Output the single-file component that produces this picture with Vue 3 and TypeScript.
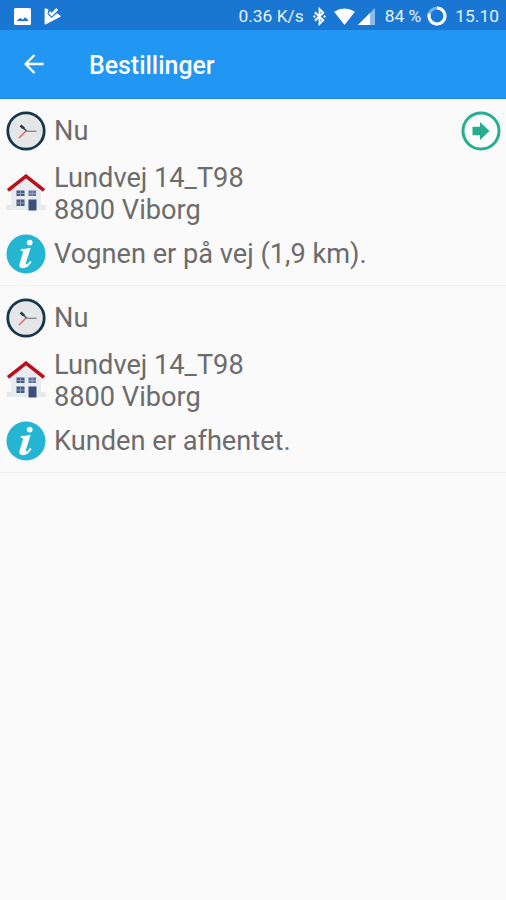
<script setup lang="ts">
interface Order {
  id: number
  time: string
  street: string
  city: string
  status: string
  enRoute: boolean
}

const orders: Order[] = [
  { id: 1, time: 'Nu', street: 'Lundvej 14_T98', city: '8800 Viborg', status: 'Vognen er på vej (1,9 km).', enRoute: true },
  { id: 2, time: 'Nu', street: 'Lundvej 14_T98', city: '8800 Viborg', status: 'Kunden er afhentet.', enRoute: false },
]
</script>

<template>
  <div class="screen">
    <header class="status-bar">
      <svg class="picture" viewBox="0 0 17 17">
        <path fill="#fff" fill-rule="evenodd" d="M1.5 0h14A1.5 1.5 0 0 1 17 1.500v14a1.500 1.500 0 0 1-1.500 1.500h-14A1.500 1.500 0 0 1 0 15.500v-14A1.500 1.500 0 0 1 1.500 0zM3.200 13h10.800v-1.200L11 9.300l-2.200 2.400L6.300 10l-3.100 2.200z" />
      </svg>
      <svg class="play" viewBox="0 0 17 17">
        <path fill="#fff" d="M.6 1.400Q.6.200 1.800.4L4.500 1.500 3.500 6l4.100 4.100L12.800 5.200l3.200 2q1.400.9 0 1.900L2 16.300Q.6 17 .6 15.500z" />
        <path fill="none" stroke="#fff" stroke-width="2.600" d="M5.300 4.300l2.400 2.300L13.200 1" />
      </svg>
      <span class="speed">0.36 K/s</span>
      <svg class="bluetooth" viewBox="0 0 14 20">
        <path fill="none" stroke="#fff" stroke-width="2.100" d="M2 5.500l9 8.500L7 18V2l4 4-9 8.500" />
        <path fill="#fff" d="M0 10l1.500-1.500L3 10l-1.500 1.500zM11 10l1.500-1.500L14 10l-1.500 1.500z" />
      </svg>
      <svg class="wifi" viewBox="0 0 22 18">
        <path fill="#fff" d="M0 4Q11-3.200 22 4L11 18z" />
      </svg>
      <svg class="signal" viewBox="0 0 17 17">
        <path fill="#8bbce9" d="M17 0v17H0z" />
        <path fill="#fff" d="M12 5v12H0z" />
      </svg>
      <span class="percent">84 %</span>
      <svg class="battery" viewBox="0 0 20 20">
        <circle cx="10" cy="10" r="8" fill="none" stroke="#75afe5" stroke-width="3" />
        <path d="M10 2a8 8 0 1 1-7.600 5.500" fill="none" stroke="#fff" stroke-width="3" />
      </svg>
      <span class="clock">15.10</span>
    </header>

    <nav class="app-bar">
      <svg class="back" viewBox="0 0 20 20">
        <path fill="none" stroke="#fff" stroke-width="2.300" d="M19.500 10H2M10.500 1L1.600 10l8.900 9" />
      </svg>
      <h1>Bestillinger</h1>
    </nav>

    <main>
      <article v-for="order in orders" :key="order.id" class="order">
        <div class="row">
          <svg class="icon" viewBox="0 0 40 40">
            <circle cx="20" cy="20" r="18.200" fill="#e5e6e7" stroke="#16364a" stroke-width="2.800" />
            <path stroke="#273a46" stroke-width="2.700" d="M14.500 14.500l3.500 3" />
            <path stroke="#273a46" stroke-width="1.300" d="M17 16.500l3.500 3.500" />
            <path stroke="#777f83" stroke-width="1.200" d="M20 20.300h10.500" />
            <path stroke="#df6565" stroke-width="1.500" d="M20 20L13 27" />
          </svg>
          <span>{{ order.time }}</span>
          <svg v-if="order.enRoute" class="icon go" viewBox="0 0 40 40">
            <circle cx="20" cy="20" r="18" fill="#fcfefd" stroke="#27ae91" stroke-width="3" />
            <path fill="#27ae91" d="M11.500 15.800h7.500V11l9.500 9-9.500 9v-4.800h-7.500z" />
          </svg>
        </div>
        <div class="row address">
          <svg class="icon" viewBox="0 1 40 40">
            <path fill="#e6e8e7" d="M.5 32H5v-1h30v1h4.500v5H.5z" />
            <path fill="#e8ebef" d="M5 15L20 3l15 12v22H5z" />
            <path fill="none" stroke="#b9101a" stroke-width="3.600" d="M2 17.300L20 3.200l18 14.100" />
            <path fill="#465d85" d="M10.500 17.500h8v5.500h-8zM10.500 26.500h8V33h-8z" />
            <path fill="#656fa6" d="M22.500 17.500H30V23h-7.500z" />
            <path fill="#3a4f7b" d="M22.500 26.500h8V37.500h-8z" />
            <path stroke="#a8b3cb" stroke-width=".7" d="M14.500 17.500V23M10.500 20.500h8M26.200 17.500V23M22.500 20.500H30M14.500 26.500V33M10.500 30h8" />
          </svg>
          <span>{{ order.street }}<br>{{ order.city }}</span>
        </div>
        <div class="row">
          <svg class="icon" viewBox="0 0 40 40">
            <circle cx="20" cy="20" r="19.500" fill="#24b5d2" />
            <circle cx="23.700" cy="8.600" r="2.900" fill="#fff" />
            <path fill="#fff" d="M15 15q4.500 0 9.700-1.200L20 28.500q-.6 2.400.6 2 1.700-.8 3.500-3.400l1.500 1Q21.500 34.300 17 34.300q-4.800-.2-3.300-5L17 18.200q.4-1.500-2.500-1.500z" />
          </svg>
          <span>{{ order.status }}</span>
        </div>
      </article>
    </main>
  </div>
</template>

<style>
body {
  margin: 0;
  background: #fafafa;
}
</style>

<style scoped>
.screen {
  height: 900px;
  overflow: hidden;
  background: #fafafa;
  font-family: Roboto, sans-serif;
}

svg {
  display: block;
  flex: none;
}

.status-bar {
  display: flex;
  align-items: center;
  box-sizing: border-box;
  height: 30px;
  padding: 2px 7px 0 14px;
  background: #1976d2;
  color: #e6f1fb;
  font-size: 17.400px;
  line-height: 28px;
  white-space: nowrap;
}

.picture { width: 17px; height: 17px; }
.play { width: 17px; height: 17px; margin-left: 13px; }
.speed { margin-left: auto; }
.bluetooth { width: 13px; height: 19px; margin-left: 9px; }
.wifi { width: 21px; height: 17px; margin-left: 8px; }
.signal { width: 17px; height: 17px; margin-left: 3px; }
.percent { margin-left: 10px; }
.battery { width: 20px; height: 20px; margin-left: 6px; }
.clock { margin-left: 8px; }

.app-bar {
  display: flex;
  align-items: center;
  box-sizing: border-box;
  height: 69px;
  padding-left: 24px;
  border-bottom: 1px solid #2585d9;
  background: #2196f3;
  color: #fff;
}

.back { width: 20px; height: 20px; }

h1 {
  margin: 4px 0 0 45px;
  font-size: 24.900px;
  font-weight: 500;
  line-height: 32px;
}

.order {
  box-sizing: border-box;
  height: 187px;
  padding: 12px 5px 0 6px;
  border-bottom: 1px solid #f1f1f1;
  color: #6c6c6c;
  font-size: 27.200px;
  line-height: 32px;
}

.row {
  display: flex;
  align-items: center;
  gap: 8px;
  height: 40px;
}

.address {
  height: 64px;
  margin: 11px 0 8px;
}

.icon { width: 40px; height: 40px; }
.go { margin-left: auto; }
</style>
